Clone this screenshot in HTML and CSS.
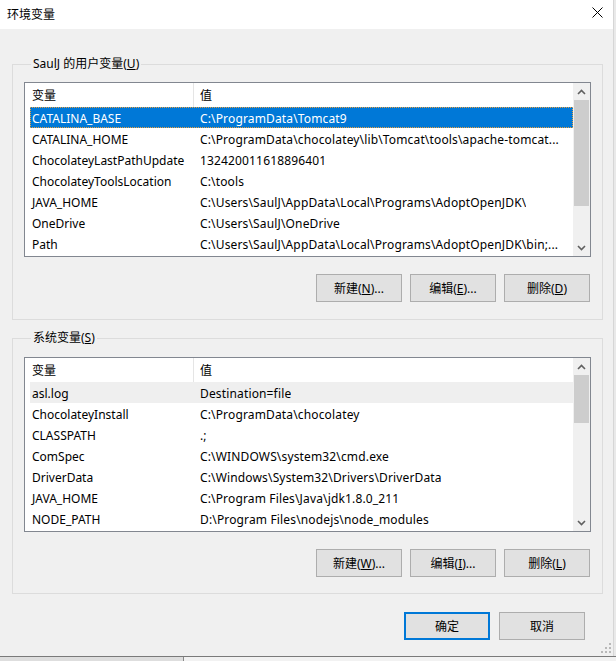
FILE: index.html
```html
<!DOCTYPE html>
<html>
<head>
    <title>环境变量</title>
    <meta charset="utf-8" />
    <link rel="stylesheet" href="styles.css">
</head>
<body>
    <div class="dialog">
        <div class="titlebar">
            <span class="title">环境变量</span>
            <span class="close">
                <svg width="11" height="11" viewBox="0 0 11 11">
                    <path d="M0.5 0.5 L10.5 10.5 M10.5 0.5 L0.5 10.5" stroke="#000" stroke-width="1" fill="none" />
                </svg>
            </span>
        </div>

        <div class="content">
            <fieldset class="group group-user">
                <legend>SaulJ 的用户变量(<u>U</u>)</legend>
                <div class="listbox">
                    <div class="list-main">
                        <div class="list-head">
                            <span class="head-name">变量</span>
                            <span class="head-value">值</span>
                        </div>
                        <div class="row selected"><span class="name">CATALINA_BASE</span><span class="value">C:\ProgramData\Tomcat9</span></div>
                        <div class="row"><span class="name">CATALINA_HOME</span><span class="value">C:\ProgramData\chocolatey\lib\Tomcat\tools\apache-tomcat...</span></div>
                        <div class="row"><span class="name">ChocolateyLastPathUpdate</span><span class="value">132420011618896401</span></div>
                        <div class="row"><span class="name">ChocolateyToolsLocation</span><span class="value">C:\tools</span></div>
                        <div class="row"><span class="name">JAVA_HOME</span><span class="value">C:\Users\SaulJ\AppData\Local\Programs\AdoptOpenJDK\</span></div>
                        <div class="row"><span class="name">OneDrive</span><span class="value">C:\Users\SaulJ\OneDrive</span></div>
                        <div class="row"><span class="name">Path</span><span class="value">C:\Users\SaulJ\AppData\Local\Programs\AdoptOpenJDK\bin;...</span></div>
                    </div>
                    <div class="scrollbar">
                        <span class="arrow">
                            <svg width="9" height="6" viewBox="0 0 9 6"><path d="M1 5 L4.5 1.5 L8 5" stroke="#606060" stroke-width="1.6" fill="none" /></svg>
                        </span>
                        <div class="track"><div class="thumb thumb-user"></div></div>
                        <span class="arrow">
                            <svg width="9" height="6" viewBox="0 0 9 6"><path d="M1 1 L4.5 4.5 L8 1" stroke="#606060" stroke-width="1.6" fill="none" /></svg>
                        </span>
                    </div>
                </div>
                <div class="actions">
                    <button class="btn">新建(<u>N</u>)...</button>
                    <button class="btn">编辑(<u>E</u>)...</button>
                    <button class="btn">删除(<u>D</u>)</button>
                </div>
            </fieldset>

            <fieldset class="group group-system">
                <legend>系统变量(<u>S</u>)</legend>
                <div class="listbox">
                    <div class="list-main">
                        <div class="list-head">
                            <span class="head-name">变量</span>
                            <span class="head-value">值</span>
                        </div>
                        <div class="row hover"><span class="name">asl.log</span><span class="value">Destination=file</span></div>
                        <div class="row"><span class="name">ChocolateyInstall</span><span class="value">C:\ProgramData\chocolatey</span></div>
                        <div class="row"><span class="name">CLASSPATH</span><span class="value">.;</span></div>
                        <div class="row"><span class="name">ComSpec</span><span class="value">C:\WINDOWS\system32\cmd.exe</span></div>
                        <div class="row"><span class="name">DriverData</span><span class="value">C:\Windows\System32\Drivers\DriverData</span></div>
                        <div class="row"><span class="name">JAVA_HOME</span><span class="value">C:\Program Files\Java\jdk1.8.0_211</span></div>
                        <div class="row"><span class="name">NODE_PATH</span><span class="value">D:\Program Files\nodejs\node_modules</span></div>
                    </div>
                    <div class="scrollbar">
                        <span class="arrow">
                            <svg width="9" height="6" viewBox="0 0 9 6"><path d="M1 5 L4.5 1.5 L8 5" stroke="#606060" stroke-width="1.6" fill="none" /></svg>
                        </span>
                        <div class="track"><div class="thumb thumb-system"></div></div>
                        <span class="arrow">
                            <svg width="9" height="6" viewBox="0 0 9 6"><path d="M1 1 L4.5 4.5 L8 1" stroke="#606060" stroke-width="1.6" fill="none" /></svg>
                        </span>
                    </div>
                </div>
                <div class="actions">
                    <button class="btn">新建(<u>W</u>)...</button>
                    <button class="btn">编辑(<u>I</u>)...</button>
                    <button class="btn">删除(<u>L</u>)</button>
                </div>
            </fieldset>
        </div>

        <div class="footer">
            <button class="btn btn-default">确定</button>
            <button class="btn">取消</button>
        </div>

        <div class="grip">
            <svg width="10" height="10" viewBox="0 0 10 10" fill="#b8b8b8">
                <rect x="8" y="0" width="2" height="2" />
                <rect x="4" y="4" width="2" height="2" /><rect x="8" y="4" width="2" height="2" />
                <rect x="0" y="8" width="2" height="2" /><rect x="4" y="8" width="2" height="2" /><rect x="8" y="8" width="2" height="2" />
            </svg>
        </div>
    </div>

    <div class="under">
        <div class="under-left"></div>
        <div class="under-right"></div>
    </div>
</body>
</html>
```

FILE: styles.css
```css
body {
    margin: 0;
    background-color: #e9e9e9;
    font-family: "Noto Sans", "Noto Sans CJK SC", sans-serif;
    font-size: 12px;
    color: #000;
    width: 616px;
    height: 661px;
    overflow: hidden;
}

.dialog {
    position: relative;
    width: 613px;
    height: 656px;
    background-color: #f0f0f0;
    border-right: 1px solid #d6d6d6;
}

.titlebar {
    height: 29px;
    background-color: #fff;
    display: flex;
    align-items: center;
    justify-content: space-between;
    padding: 0 10px 0 7px;
}

.title {
    font-size: 12px;
    line-height: 16px;
}

.close {
    display: flex;
    margin-top: -4px;
}

.content {
    padding: 0 0 0 12px;
}

.group {
    margin: 26px 0 0 0;
    padding: 11px 11px 17px 11px;
    width: 567px;
    border: 1px solid #dcdcdc;
}

.group-user {
    margin-top: 27px;
    padding-top: 10px;
}

.group-system {
    margin-top: 10px;
    padding-bottom: 16px;
}

.group legend {
    padding: 0 2px;
    margin-left: 7px;
    line-height: 16px;
}

.listbox {
    display: flex;
    height: 173px;
    border: 1px solid #828790;
    background-color: #fff;
}

.list-main {
    flex: 1;
    overflow: hidden;
}

.list-head {
    display: flex;
    height: 24px;
    line-height: 26px;
}

.head-name {
    width: 161px;
    padding-left: 7px;
    border-right: 1px solid #e5e5e5;
}

.head-value {
    padding-left: 6px;
}

.row {
    display: flex;
    height: 21px;
    line-height: 23px;
    margin-left: 5px;
    white-space: nowrap;
}

.row .name {
    width: 166px;
    padding-left: 2px;
    flex-shrink: 0;
}

.row .value {
    padding-left: 2px;
    overflow: hidden;
    letter-spacing: 0.15px;
}

.row.selected {
    background-color: #0078d7;
    color: #fff;
    outline: 1px dotted #e8a040;
    outline-offset: -1px;
}

.row.hover {
    background-color: #efefef;
}

.scrollbar {
    width: 17px;
    display: flex;
    flex-direction: column;
    background-color: #f0f0f0;
}

.arrow {
    height: 17px;
    display: flex;
    align-items: center;
    justify-content: center;
}

.track {
    flex: 1;
    padding: 0 1px;
}

.thumb {
    background-color: #cdcdcd;
}

.thumb-user {
    height: 106px;
}

.thumb-system {
    height: 48px;
}

.actions {
    display: flex;
    justify-content: flex-end;
    gap: 8px;
    margin-top: 17px;
    padding-right: 1px;
}

.btn {
    width: 86px;
    height: 28px;
    background-color: #e1e1e1;
    border: 1px solid #adadad;
    font-family: "Noto Sans", "Noto Sans CJK SC", sans-serif;
    font-size: 12px;
    color: #000;
    padding: 0;
}

.footer {
    display: flex;
    justify-content: flex-end;
    gap: 9px;
    margin-top: 18px;
    padding-right: 28px;
}

.btn-default {
    border: 2px solid #0078d7;
}

.grip {
    position: absolute;
    right: 2px;
    bottom: 3px;
    display: flex;
}

.under {
    display: flex;
    height: 5px;
    border-top: 1px solid #7a7a7a;
}

.under-left {
    width: 183px;
    background-color: #dedede;
    border-right: 1px solid #888;
}

.under-right {
    flex: 1;
    background-color: #f2f2f2;
}
```
